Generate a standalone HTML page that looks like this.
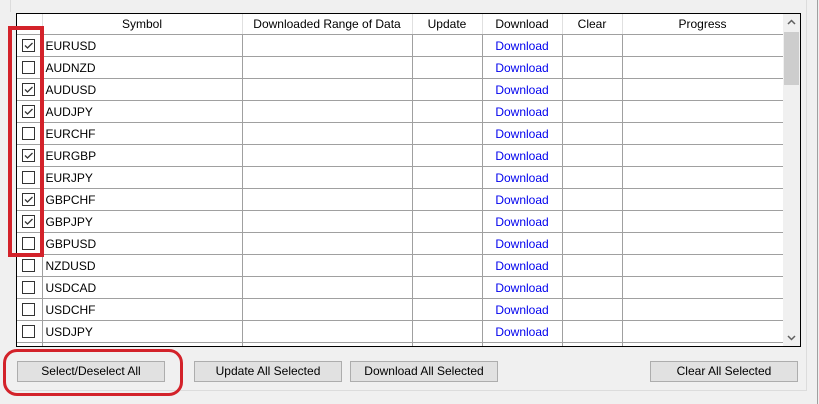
<!DOCTYPE html><html><head><style>
body{margin:0;width:819px;height:404px;background:#f0f0f0;font-family:"Liberation Sans",sans-serif;font-size:12px;position:relative;overflow:hidden}
.abs{position:absolute}
table{border-collapse:collapse;table-layout:fixed;position:absolute;left:0;top:0}
td{border:1px solid #a0a0a0;height:21px;padding:0 0 0 3px;white-space:nowrap;overflow:hidden;background:#fff;color:#000}
tr td:first-child{border-left:none}
th{font-weight:normal;height:20px;border-right:1px solid #e0e0e0;border-bottom:1px solid #a0a0a0;background:#fff;padding:0}
td.d{color:#0000ee;text-align:center;padding:0}
.cb{width:11px;height:11px;border:1px solid #333;background:#fff;margin-left:5px;position:relative}
.cb svg{position:absolute;left:0;top:0}
.btn{position:absolute;top:361px;height:19px;width:146px;background:#e1e1e1;border:1px solid #adadad;text-align:center;line-height:19px}
</style></head><body>
<div class="abs" style="left:10px;top:0;width:1px;height:12px;background:#dcdcdc"></div>
<div class="abs" style="left:806px;top:0;width:1px;height:390px;background:#dcdcdc"></div>
<div class="abs" style="left:10px;top:390px;width:797px;height:1px;background:#dcdcdc"></div>
<div class="abs" style="left:817px;top:0;width:1px;height:404px;background:#a0a0a0"></div>
<div class="abs" style="left:16px;top:13px;width:783px;height:332px;border:1px solid #000;background:#fff;overflow:hidden">
<table style="width:766px">
<colgroup><col style="width:25px"><col style="width:200px"><col style="width:170px"><col style="width:70px"><col style="width:80px"><col style="width:60px"><col style="width:161px"></colgroup>
<tr><th></th><th>Symbol</th><th>Downloaded Range of Data</th><th>Update</th><th>Download</th><th>Clear</th><th>Progress</th></tr>
<tr><td style="padding:0"><div class="cb"><svg width="11" height="11"><path d="M2 5.5L4.5 8L9.5 3" fill="none" stroke="#333" stroke-width="1.3"/></svg></div></td><td>EURUSD</td><td></td><td></td><td class="d">Download</td><td></td><td></td></tr>
<tr><td style="padding:0"><div class="cb"></div></td><td>AUDNZD</td><td></td><td></td><td class="d">Download</td><td></td><td></td></tr>
<tr><td style="padding:0"><div class="cb"><svg width="11" height="11"><path d="M2 5.5L4.5 8L9.5 3" fill="none" stroke="#333" stroke-width="1.3"/></svg></div></td><td>AUDUSD</td><td></td><td></td><td class="d">Download</td><td></td><td></td></tr>
<tr><td style="padding:0"><div class="cb"><svg width="11" height="11"><path d="M2 5.5L4.5 8L9.5 3" fill="none" stroke="#333" stroke-width="1.3"/></svg></div></td><td>AUDJPY</td><td></td><td></td><td class="d">Download</td><td></td><td></td></tr>
<tr><td style="padding:0"><div class="cb"></div></td><td>EURCHF</td><td></td><td></td><td class="d">Download</td><td></td><td></td></tr>
<tr><td style="padding:0"><div class="cb"><svg width="11" height="11"><path d="M2 5.5L4.5 8L9.5 3" fill="none" stroke="#333" stroke-width="1.3"/></svg></div></td><td>EURGBP</td><td></td><td></td><td class="d">Download</td><td></td><td></td></tr>
<tr><td style="padding:0"><div class="cb"></div></td><td>EURJPY</td><td></td><td></td><td class="d">Download</td><td></td><td></td></tr>
<tr><td style="padding:0"><div class="cb"><svg width="11" height="11"><path d="M2 5.5L4.5 8L9.5 3" fill="none" stroke="#333" stroke-width="1.3"/></svg></div></td><td>GBPCHF</td><td></td><td></td><td class="d">Download</td><td></td><td></td></tr>
<tr><td style="padding:0"><div class="cb"><svg width="11" height="11"><path d="M2 5.5L4.5 8L9.5 3" fill="none" stroke="#333" stroke-width="1.3"/></svg></div></td><td>GBPJPY</td><td></td><td></td><td class="d">Download</td><td></td><td></td></tr>
<tr><td style="padding:0"><div class="cb"></div></td><td>GBPUSD</td><td></td><td></td><td class="d">Download</td><td></td><td></td></tr>
<tr><td style="padding:0"><div class="cb"></div></td><td>NZDUSD</td><td></td><td></td><td class="d">Download</td><td></td><td></td></tr>
<tr><td style="padding:0"><div class="cb"></div></td><td>USDCAD</td><td></td><td></td><td class="d">Download</td><td></td><td></td></tr>
<tr><td style="padding:0"><div class="cb"></div></td><td>USDCHF</td><td></td><td></td><td class="d">Download</td><td></td><td></td></tr>
<tr><td style="padding:0"><div class="cb"></div></td><td>USDJPY</td><td></td><td></td><td class="d">Download</td><td></td><td></td></tr>
<tr><td></td><td></td><td></td><td></td><td></td><td></td><td></td></tr>
</table>
<div class="abs" style="left:766px;top:0;width:17px;height:332px;background:#f0f0f0">
<svg class="abs" style="left:4px;top:5px" width="9" height="6"><path d="M1 5L4.5 1.5L8 5" fill="none" stroke="#606060" stroke-width="1.5"/></svg>
<div class="abs" style="left:1px;top:18px;width:15px;height:53px;background:#cdcdcd"></div>
<svg class="abs" style="left:4px;top:321px" width="9" height="6"><path d="M1 1L4.5 4.5L8 1" fill="none" stroke="#606060" stroke-width="1.5"/></svg>
</div>
</div>
<div class="abs" style="left:8px;top:26px;width:28px;height:223px;border:4px solid #d3222a"></div>
<div class="btn" style="left:17px">Select/Deselect All</div>
<div class="btn" style="left:194px">Update All Selected</div>
<div class="btn" style="left:350px">Download All Selected</div>
<div class="btn" style="left:650px">Clear All Selected</div>
<div class="abs" style="left:3px;top:349px;width:174px;height:41px;border:3px solid #d3222a;border-radius:14px"></div>
</body></html>
